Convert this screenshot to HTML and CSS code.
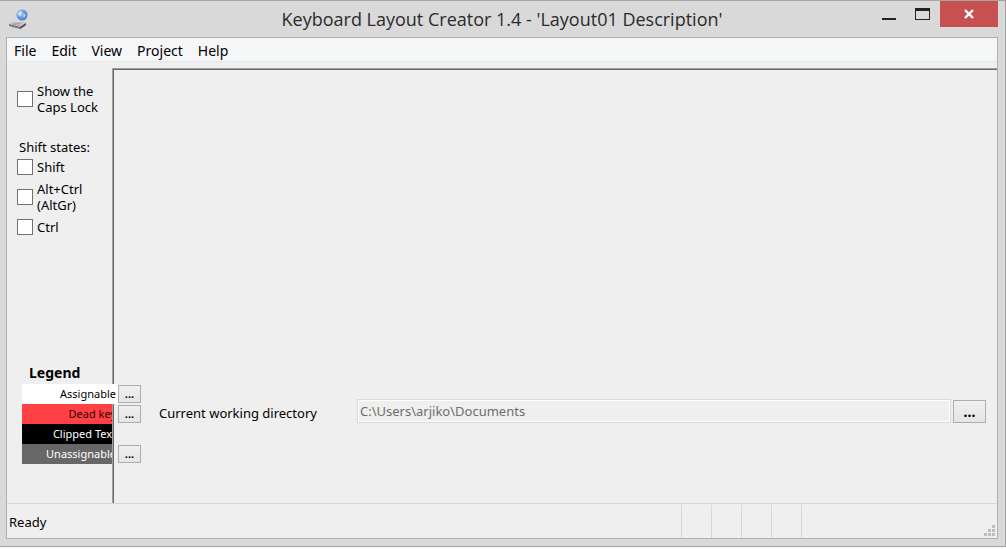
FILE: index.html
```html
<!DOCTYPE html>
<html lang="en">
<head>
<meta charset="utf-8">
<title>Keyboard Layout Creator 1.4 - 'Layout01 Description'</title>
<link rel="stylesheet" href="styles.css">
</head>

<body>
<div class="window">
	<header class="titlebar">
		<svg class="app-icon" width="22" height="22" viewBox="0 0 22 22">
			<defs>
				<radialGradient id="globe" cx="0.35" cy="0.35" r="0.7">
					<stop offset="0" stop-color="#c4dcf6"/>
					<stop offset="0.5" stop-color="#6a9fe0"/>
					<stop offset="1" stop-color="#4a7cc8"/>
				</radialGradient>
			</defs>
			<path d="M0 15l5-2 12 1v2l-6 4L0 17z" fill="#77777a"/>
			<path d="M0 15l5-2 12 1-6 4z" fill="#d0d0d2"/>
			<path d="M3 15l8 1.500M5 14l8 1" stroke="#a0a0a4" fill="none"/>
			<path d="M11 18l6-4v2l-6 4z" fill="#4e4e52"/>
			<circle cx="13" cy="6" r="5.500" fill="url(#globe)"/>
			<path d="M9 4l3-2 1 2-2 3-2-1zM15 5l2 1-2 3-1-2z" fill="#e0edf9" opacity="0.700"/>
		</svg>
		<h1 class="title">Keyboard Layout Creator 1.4 - 'Layout01 Description'</h1>
		<div class="controls">
			<button class="control" type="button" aria-label="Minimize">
				<svg width="16" height="14" viewBox="0 0 16 14"><path d="M1 11h14v2H1z" fill="#222"/></svg>
			</button>
			<button class="control" type="button" aria-label="Maximize">
				<svg width="16" height="14" viewBox="0 0 16 14"><path d="M0 1h15v12H0zM1 4v8h13V4z" fill="#222" fill-rule="evenodd"/></svg>
			</button>
			<button class="control close" type="button" aria-label="Close">
				<svg width="12" height="10" viewBox="0 0 12 10"><path d="M2 1l8 8M10 1L2 9" stroke="#fff" stroke-width="2.400"/></svg>
			</button>
		</div>
	</header>

	<div class="client">
		<nav class="menu">
			<a href="#">File</a>
			<a href="#">Edit</a>
			<a href="#">View</a>
			<a href="#">Project</a>
			<a href="#">Help</a>
		</nav>

		<div class="main">
			<aside class="sidebar">
				<label class="check"><input type="checkbox"><span>Show the<br>Caps Lock</span></label>
				<div class="states-title">Shift states:</div>
				<div class="states">
					<label class="check"><input type="checkbox"><span>Shift</span></label>
					<label class="check"><input type="checkbox"><span>Alt+Ctrl<br>(AltGr)</span></label>
					<label class="check"><input type="checkbox"><span>Ctrl</span></label>
				</div>
				<h2 class="legend-title">Legend</h2>
				<ul class="legend">
					<li class="assignable"><span>Assignable</span></li>
					<li class="dead"><span>Dead key</span></li>
					<li class="clipped"><span>Clipped Text</span></li>
					<li class="unassignable"><span>Unassignable</span></li>
				</ul>
			</aside>
			<section class="panel">
				<div class="pickers">
					<button class="picker" type="button" aria-label="Assignable colour">...</button>
					<button class="picker" type="button" aria-label="Dead key colour">...</button>
					<button class="picker last" type="button" aria-label="Unassignable colour">...</button>
				</div>
				<div class="directory">
					<label for="dir">Current working directory</label>
					<input id="dir" type="text" value="C:\Users\arjiko\Documents" disabled>
					<button class="browse" type="button" aria-label="Browse">...</button>
				</div>
			</section>
		</div>

		<footer class="status">
			<span class="ready">Ready</span>
			<span class="cell"></span>
			<span class="cell"></span>
			<span class="cell"></span>
			<span class="cell"></span>
			<span class="rest">
				<svg width="12" height="12" viewBox="0 0 12 12" fill="#bdbdbd">
					<path d="M8 0h3v3H8zM4 4h3v3H4zM8 4h3v3H8zM0 8h3v3H0zM4 8h3v3H4zM8 8h3v3H8z"/>
				</svg>
			</span>
		</footer>
	</div>
</div>
</body>
</html>
```
FILE: styles.css
```css
*{box-sizing:border-box;}
body{margin:0; background:#fafafa; color:#000; font:13px/16px "Noto Sans", "Open Sans", sans-serif;}
button, input{font:inherit; margin:0; padding:0; border-radius:0;}
h1, h2, ul{margin:0; padding:0; font-weight:normal; list-style:none;}

.window{display:flex; flex-direction:column; height:calc(100vh - 2px); padding:0 7px 7px 6px; background:#d9d9d9; border:solid #a5a5a5; border-width:1px 1px 1px 0;}

/* title bar */
.titlebar{display:grid; grid-template-columns:1fr auto 1fr; height:36px;}
.app-icon{margin:8px 0 0 3px;}
.title{font:18px/36px "Open Sans", sans-serif; color:#2b2b2b;}
.controls{display:flex; justify-content:flex-end; align-items:flex-start;}
.control{display:flex; align-items:center; justify-content:center; width:34px; height:26px; border:0; background:none;}
.close{width:58px; background:#c75050;}

.client{flex:1; display:flex; flex-direction:column; border:1px solid #b0b0b0; background:#efefef;}

.menu{display:flex; gap:15px; height:24px; padding-left:7px; background:#f5f6f7; border-bottom:1px solid #e8eaea; font-size:14px; line-height:26px;}
.menu a{color:#000; text-decoration:none;}

.main{flex:1; display:flex;}
.sidebar{display:flex; flex-direction:column; width:105px; padding:21px 0 39px;}
.check{display:flex; align-items:center; gap:4px; padding-left:10px; white-space:nowrap;}
.check input{appearance:none; width:16px; height:16px; border:1px solid #707070; background:#fff;}
.states-title{margin:24px 0 4px 12px;}
.states{display:flex; flex-direction:column; gap:6px;}

/* legend rows run under the panel edge, only the first one covers it */
.legend-title{margin:auto 0 3px 22px; font-size:14px; font-weight:bold;}
.legend{margin-left:15px; font-size:11px; line-height:20px;}
.legend li{height:20px; overflow:hidden;}
.legend span{display:block; width:96px; padding-right:2px; text-align:right;}
.legend .assignable{position:relative; z-index:1; overflow:visible;}
.assignable span{background:#fff;}
.dead{background:#ff4146; color:#300;}
.clipped{background:#000; color:#fff;}
.unassignable{background:#676767; color:#fff;}

.panel{flex:1; display:flex; align-items:flex-end; gap:18px; margin-top:6px; padding:1px 11px 39px 5px; border:solid #a0a0a0; border-width:1px 0 0 1px; box-shadow:inset 1px 1px #696969;}
.pickers{display:flex; flex-direction:column; gap:2px; height:80px; padding:1px 0;}
.picker, .browse{border:1px solid #adadad; background:linear-gradient(#f0f0f0, #e5e5e5); color:#000; font-weight:bold;}
.picker{width:23px; height:18px; font-size:11px; line-height:14px;}
.pickers .last{margin-top:auto;}
.directory{flex:1; display:flex; align-items:flex-end; margin-bottom:41px;}
.directory label{width:198px; line-height:20px;}
.directory input{flex:1; height:24px; margin-right:2px; padding:0 2px; border:1px solid #d9d9d9; box-shadow:inset 0 0 0 1px #fff; background:#efefef; color:#6d6d6d;}
.browse{width:33px; height:23px; font-size:14px;}

/* status bar */
.status{display:flex; height:35px; border-top:1px solid #d7d7d7; padding-top:1px; line-height:34px;}
.ready{flex:1; padding-left:2px;}
.cell{width:30px; border-left:1px solid #d7d7d7;}
.rest{display:flex; align-items:flex-end; justify-content:flex-end; width:196px; padding:0 1px 1px 0; border-left:1px solid #d7d7d7;}
```
